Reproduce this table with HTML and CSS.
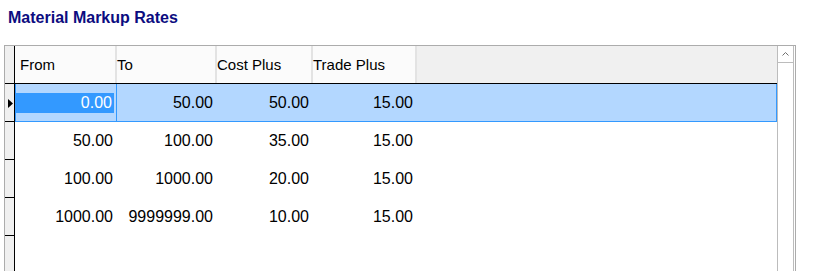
FILE: index.html
```html
<!DOCTYPE html>
<html>
<head>
<meta charset="utf-8">
<link rel="stylesheet" href="styles.css">
</head>
<body>
<div class="title">Material Markup Rates</div>
<div class="grid">
  <div class="main">
    <div class="hrow">
      <div class="ind"></div>
      <div class="hcell c1 first">From</div>
      <div class="hcell c2">To</div>
      <div class="hcell c3">Cost Plus</div>
      <div class="hcell c4">Trade Plus</div>
      <div class="hfill"></div>
    </div>
    <div class="row sel">
      <div class="ind"><svg class="arrow" width="9" height="37" viewBox="0 0 9 37"><polygon points="3,15 8,19.5 3,24" fill="#000"/></svg></div>
      <div class="body">
        <div class="cell c1 editcell"><span class="edit">0.00</span></div>
        <div class="cell c2">50.00</div>
        <div class="cell c3">50.00</div>
        <div class="cell c4">15.00</div>
      </div>
    </div>
    <div class="row">
      <div class="ind"></div>
      <div class="body">
        <div class="cell c1">50.00</div>
        <div class="cell c2">100.00</div>
        <div class="cell c3">35.00</div>
        <div class="cell c4">15.00</div>
      </div>
    </div>
    <div class="row">
      <div class="ind"></div>
      <div class="body">
        <div class="cell c1">100.00</div>
        <div class="cell c2">1000.00</div>
        <div class="cell c3">20.00</div>
        <div class="cell c4">15.00</div>
      </div>
    </div>
    <div class="row">
      <div class="ind"></div>
      <div class="body">
        <div class="cell c1">1000.00</div>
        <div class="cell c2">9999999.00</div>
        <div class="cell c3">10.00</div>
        <div class="cell c4">15.00</div>
      </div>
    </div>
    <div class="rest">
      <div class="ind"></div>
      <div class="restbody"></div>
    </div>
  </div>
  <div class="vscroll">
    <div class="up"><svg width="7" height="4" viewBox="0 0 7 4"><polyline points="0.5,3.5 3.5,0.5 6.5,3.5" fill="none" stroke="#707070" stroke-width="1"/></svg></div>
  </div>
</div>
</body>
</html>
```

FILE: styles.css
```css
html, body {
  margin: 0;
  padding: 0;
  overflow: hidden;
  background: #ffffff;
  font-family: "Liberation Sans", Arial, sans-serif;
  color: #000;
}

.title {
  margin: 8px 0 0 8px;
  height: 19px;
  line-height: 19px;
  font-size: 16px;
  font-weight: bold;
  color: #0c0c80;
}

.grid {
  margin: 18px 0 0 4px;
  width: 792px;
  height: 226px;
  box-sizing: border-box;
  border: 1px solid #acacac;
  border-bottom: 0;
  display: flex;
}

.main {
  flex: 1;
  display: flex;
  flex-direction: column;
}

.ind {
  width: 10px;
  flex: none;
  box-sizing: border-box;
  background: #f0f0f0;
  border-right: 1px solid #000;
}

.arrow {
  display: block;
}

.hrow {
  display: flex;
  height: 37px;
  border-bottom: 1px solid #000;
}

.hcell {
  box-sizing: border-box;
  flex: none;
  background: #fbfbfb;
  border-right: 2px solid #e3e3e3;
  font-size: 15px;
  line-height: 37px;
  white-space: nowrap;
}

.hcell.first {
  padding-left: 5px;
}

.hrow .c1 { width: 102px; }
.hrow .c2 { width: 100px; }
.hrow .c3 { width: 96px; }
.hrow .c4 { width: 104px; }

.hfill {
  flex: 1;
  background: #f0f0f0;
}

.row {
  display: flex;
  height: 38px;
}

.row .ind {
  border-bottom: 1px solid #000;
}

.body {
  flex: 1;
  display: flex;
  box-sizing: border-box;
  border: 1px solid transparent;
  border-top: 0;
}

.sel .body {
  background: #b3d7ff;
  border-color: #3399ff;
}

.cell {
  flex: none;
  box-sizing: border-box;
  text-align: right;
  padding-right: 4px;
  font-size: 16px;
  line-height: 37px;
  white-space: nowrap;
}

.body .c1 { width: 101px; }
.body .c2 { width: 100px; }
.body .c3 { width: 96px; }
.body .c4 { width: 104px; }

.editcell {
  display: flex;
  align-items: center;
  padding-right: 1px;
  border-right: 1px solid #3399ff;
}

.edit {
  width: 98px;
  height: 20px;
  margin-right: 1px;
  box-sizing: border-box;
  background: #3399ff;
  color: #ffffff;
  line-height: 20px;
  text-align: right;
  padding-right: 2px;
}

.rest {
  flex: 1;
  display: flex;
}

.restbody {
  flex: 1;
  background: #ffffff;
}

.vscroll {
  width: 17px;
  flex: none;
  box-sizing: border-box;
  margin-right: 1px;
  border-left: 1px solid #bcbcbc;
  border-right: 1px solid #bcbcbc;
  background: #ffffff;
}

.up {
  height: 17px;
  box-sizing: border-box;
  border-bottom: 1px solid #bcbcbc;
  display: flex;
  align-items: center;
  justify-content: center;
}

.up svg {
  display: block;
}
```
